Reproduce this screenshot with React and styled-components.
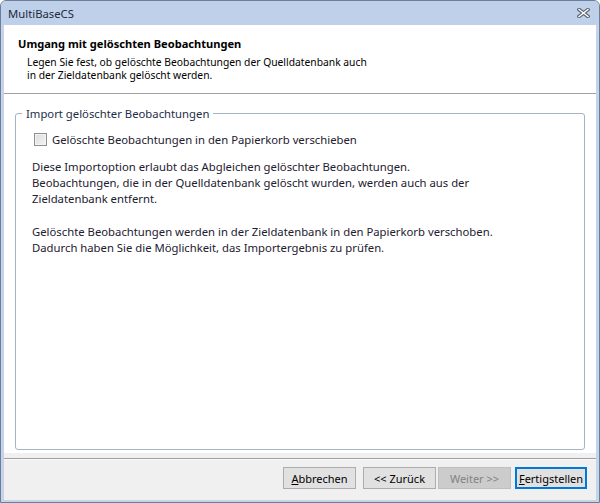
import * as React from "react";
import styled, { createGlobalStyle } from "styled-components";

const GlobalStyle = createGlobalStyle`
  html, body {
    margin: 0;
    padding: 0;
    background: #ffffff;
  }
  body {
    font-family: "Noto Sans", "Open Sans", sans-serif;
    font-size: 11.3px;
    color: #1b1b1b;
  }
`;

const Window = styled.div`
  width: 600px;
  height: 503px;
  box-sizing: border-box;
  display: flex;
  flex-direction: column;
  background: #c4d5eb;
  border: 1px solid #6e7f95;
  border-radius: 6px 6px 0 0;
  overflow: hidden;
`;

const TitleBar = styled.div`
  height: 24px;
  flex: none;
  display: flex;
  align-items: center;
  justify-content: space-between;
  padding: 0 9px 0 7px;
  background: #bfd1ea;
  color: #1e2a3a;
  font-size: 11.3px;
`;

const Client = styled.div`
  flex: 1;
  display: flex;
  flex-direction: column;
  margin: 0 3px 2px 3px;
  min-height: 0;
`;

const Header = styled.div`
  height: 69px;
  flex: none;
  box-sizing: border-box;
  background: #ffffff;
  border-bottom: 1px solid #a0a0a0;
  padding: 11px 0 0 14px;

  h1 {
    margin: 0 0 4px 0;
    font-size: 11.1px;
    font-weight: 700;
    color: #000;
    line-height: 16px;
  }

  p {
    margin: 0 0 0 9px;
    font-size: 10.3px;
    line-height: 13px;
    color: #000;
  }
`;

const Body = styled.div`
  flex: 1;
  background: #ffffff;
  display: flex;
  flex-direction: column;
  padding: 12px 11px 3px 11px;
  min-height: 0;
`;

const Group = styled.fieldset`
  flex: 1;
  margin: 0;
  padding: 11px 16px 0 18px;
  border: 1px solid #a5b3c6;
  border-radius: 3px;

  legend {
    margin-left: -12px;
    padding: 0 4px;
    color: #1e2e48;
    font-size: 11.3px;
  }
`;

const CheckRow = styled.label`
  display: flex;
  align-items: center;
  gap: 5px;
  color: #1e2030;
`;

const CheckBox = styled.span`
  width: 11px;
  height: 11px;
  flex: none;
  border: 1px solid #8e8f8f;
  background: linear-gradient(135deg, #dcdcdc 0%, #f4f4f4 100%);
  box-shadow: inset 0 0 0 1px #f4f4f4;
`;

const Description = styled.p`
  margin: 12px 0 0 -2px;
  line-height: 16.2px;
  color: #1e2030;
`;

const Footer = styled.div`
  flex: none;
  height: 42px;
  background: #f0f0f0;
  padding-top: 5px;
  display: flex;
  flex-direction: column;
`;

const Separator = styled.div`
  height: 1px;
  background: #a0a0a0;
  border-bottom: 1px solid #fafafa;
`;

const ButtonRow = styled.div`
  display: flex;
  justify-content: flex-end;
  padding: 7px 9px 0 0;
`;

const Button = styled.button`
  width: ${p => p.$width || 73}px;
  height: 22px;
  margin-left: ${p => p.$gap ?? 7}px;
  padding: 0;
  box-sizing: border-box;
  font-family: inherit;
  font-size: 11px;
  white-space: nowrap;
  color: ${p => (p.disabled ? "#838383" : "#000")};
  background: ${p => (p.disabled ? "#cccccc" : "#e1e1e1")};
  border: ${p =>
    p.$default ? "2px solid #0078d7" : p.disabled ? "1px solid #bfbfbf" : "1px solid #adadad"};

  u {
    text-decoration: underline;
  }
`;

const CloseIcon = () => (
  <svg width="13" height="10" viewBox="0 0 13 10">
    <path d="M2 1.5 L11 8.5 M11 1.5 L2 8.5" stroke="#5b6470" strokeWidth="3.6" strokeLinecap="square" />
    <path d="M2 1.5 L11 8.5 M11 1.5 L2 8.5" stroke="#ffffff" strokeWidth="1.4" strokeLinecap="square" />
  </svg>
);

export default function App() {
  return (
    <>
      <GlobalStyle />
      <Window>
        <TitleBar>
          <span>MultiBaseCS</span>
          <CloseIcon />
        </TitleBar>
        <Client>
          <Header>
            <h1>Umgang mit gelöschten Beobachtungen</h1>
            <p>
              Legen Sie fest, ob gelöschte Beobachtungen der Quelldatenbank auch
              <br />
              in der Zieldatenbank gelöscht werden.
            </p>
          </Header>
          <Body>
            <Group>
              <legend>Import gelöschter Beobachtungen</legend>
              <CheckRow>
                <CheckBox />
                Gelöschte Beobachtungen in den Papierkorb verschieben
              </CheckRow>
              <Description>
                Diese Importoption erlaubt das Abgleichen gelöschter Beobachtungen.
                <br />
                Beobachtungen, die in der Quelldatenbank gelöscht wurden, werden auch aus der
                <br />
                Zieldatenbank entfernt.
                <br />
                <br />
                Gelöschte Beobachtungen werden in der Zieldatenbank in den Papierkorb verschoben.
                <br />
                Dadurch haben Sie die Möglichkeit, das Importergebnis zu prüfen.
              </Description>
            </Group>
          </Body>
          <Footer>
            <Separator />
            <ButtonRow>
              <Button>
                <u>A</u>bbrechen
              </Button>
              <Button>&lt;&lt; Zurück</Button>
              <Button disabled $gap={2}>
                Weiter &gt;&gt;
              </Button>
              <Button $default $width={72} $gap={4}>
                <u>F</u>ertigstellen
              </Button>
            </ButtonRow>
          </Footer>
        </Client>
      </Window>
    </>
  );
}
